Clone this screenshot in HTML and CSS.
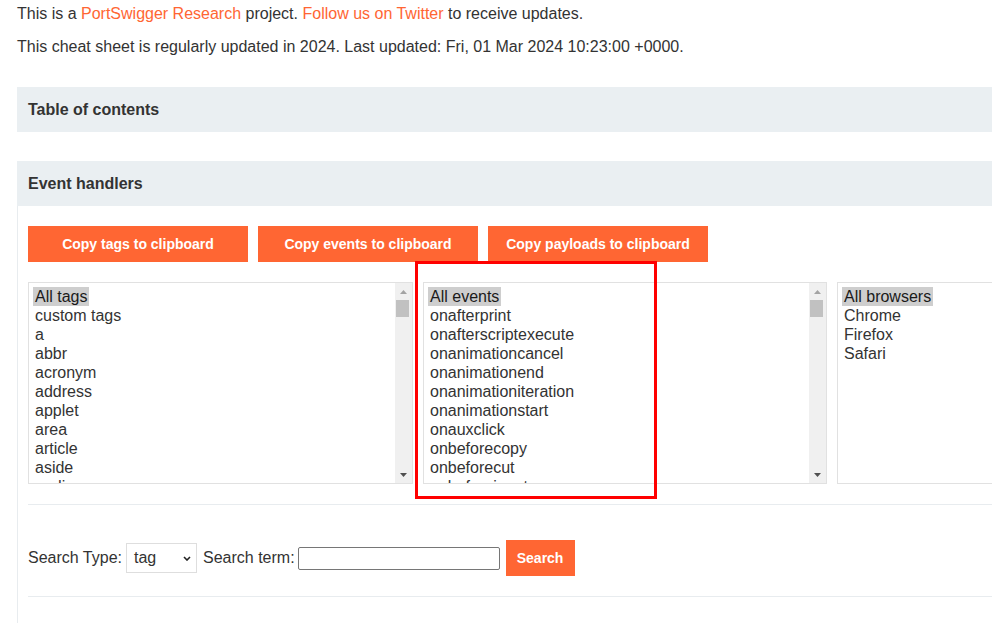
FILE: index.html
```html
<!DOCTYPE html>
<html lang="en">
<head>
<meta charset="utf-8">
<title>XSS cheat sheet</title>
<link rel="stylesheet" href="styles.css">
</head>
<body>
<div class="page">
  <div class="intro">
    <p>This is a <a href="#">PortSwigger Research</a> project. <a href="#">Follow us on Twitter</a> to receive updates.</p>
    <p>This cheat sheet is regularly updated in 2024. Last updated: Fri, 01 Mar 2024 10:23:00 +0000.</p>
  </div>

  <section class="toc">
    <h2 class="section-head">Table of contents</h2>
  </section>

  <section class="events">
    <h2 class="section-head">Event handlers</h2>
    <div class="section-body">
      <div class="copy-row">
        <button class="btn btn-copy">Copy tags to clipboard</button>
        <button class="btn btn-copy">Copy events to clipboard</button>
        <button class="btn btn-copy">Copy payloads to clipboard</button>
      </div>

      <div class="lists">
        <div class="listbox listbox-tags">
          <div class="options">
            <div class="opt"><span class="sel">All tags</span></div>
            <div class="opt"><span>custom tags</span></div>
            <div class="opt"><span>a</span></div>
            <div class="opt"><span>abbr</span></div>
            <div class="opt"><span>acronym</span></div>
            <div class="opt"><span>address</span></div>
            <div class="opt"><span>applet</span></div>
            <div class="opt"><span>area</span></div>
            <div class="opt"><span>article</span></div>
            <div class="opt"><span>aside</span></div>
            <div class="opt"><span>audio</span></div>
          </div>
          <div class="scrollbar">
            <div class="arrow"><svg width="7" height="4" viewBox="0 0 7 4"><polygon points="0,4 3.5,0 7,4" fill="#a3a3a3"/></svg></div>
            <div class="thumb"></div>
            <div class="track-fill"></div>
            <div class="arrow"><svg width="7" height="4" viewBox="0 0 7 4"><polygon points="0,0 7,0 3.5,4" fill="#505050"/></svg></div>
          </div>
        </div>

        <div class="listbox listbox-events">
          <div class="options">
            <div class="opt"><span class="sel">All events</span></div>
            <div class="opt"><span>onafterprint</span></div>
            <div class="opt"><span>onafterscriptexecute</span></div>
            <div class="opt"><span>onanimationcancel</span></div>
            <div class="opt"><span>onanimationend</span></div>
            <div class="opt"><span>onanimationiteration</span></div>
            <div class="opt"><span>onanimationstart</span></div>
            <div class="opt"><span>onauxclick</span></div>
            <div class="opt"><span>onbeforecopy</span></div>
            <div class="opt"><span>onbeforecut</span></div>
            <div class="opt"><span>onbeforeinput</span></div>
          </div>
          <div class="scrollbar">
            <div class="arrow"><svg width="7" height="4" viewBox="0 0 7 4"><polygon points="0,4 3.5,0 7,4" fill="#a3a3a3"/></svg></div>
            <div class="thumb"></div>
            <div class="track-fill"></div>
            <div class="arrow"><svg width="7" height="4" viewBox="0 0 7 4"><polygon points="0,0 7,0 3.5,4" fill="#505050"/></svg></div>
          </div>
        </div>

        <div class="listbox listbox-browsers">
          <div class="options">
            <div class="opt"><span class="sel">All browsers</span></div>
            <div class="opt"><span>Chrome</span></div>
            <div class="opt"><span>Firefox</span></div>
            <div class="opt"><span>Safari</span></div>
          </div>
        </div>

        <div class="highlight-box"></div>
      </div>

      <hr class="rule">

      <div class="search-row">
        <label class="label">Search Type:</label>
        <div class="type-select">
          <span class="type-value">tag</span>
          <svg class="chevron" width="8" height="5" viewBox="0 0 8 5"><polyline points="1,1 4,4 7,1" fill="none" stroke="#222" stroke-width="1.6"/></svg>
        </div>
        <label class="label">Search term:</label>
        <input class="term-input" type="text">
        <button class="btn btn-search">Search</button>
      </div>

      <hr class="rule">
    </div>
  </section>
</div>
</body>
</html>
```

FILE: styles.css
```css
html, body {
  margin: 0;
  padding: 0;
  overflow: hidden;
  background: #ffffff;
}

body {
  font-family: "Liberation Sans", Arial, sans-serif;
  font-size: 16px;
  color: #333333;
}

.page {
  width: 1140px;
  padding: 5px 0 40px 17px;
}

.intro p {
  margin: 0 0 15px;
  line-height: 18px;
}

.intro a {
  color: #ff6633;
  text-decoration: none;
}

.toc {
  margin-top: 31px;
  margin-bottom: 29px;
}

.section-head {
  margin: 0;
  height: 45px;
  display: flex;
  align-items: center;
  padding: 0 11px;
  background: #eaeff2;
  font-size: 16px;
  font-weight: bold;
  color: #333333;
}

.section-body {
  border-left: 1px solid #e8ecef;
  padding: 20px 0 30px 10px;
}

.copy-row {
  display: flex;
  gap: 10px;
}

.btn {
  border: none;
  background: #ff6633;
  color: #ffffff;
  font-family: "Liberation Sans", Arial, sans-serif;
  font-weight: bold;
  font-size: 14px;
  padding: 0;
  cursor: pointer;
}

.btn-copy {
  width: 220px;
  height: 36px;
}

.lists {
  position: relative;
  display: flex;
  gap: 10px;
  margin-top: 20px;
}

.listbox {
  height: 202px;
  box-sizing: border-box;
  border: 1px solid #e1e1e1;
  display: flex;
  overflow: hidden;
  background: #ffffff;
  flex: none;
}

.listbox-tags { width: 385px; }
.listbox-events { width: 404px; }
.listbox-browsers { width: 300px; }

.options {
  flex: 1;
  padding: 4px 0 0 4px;
  overflow: hidden;
}

.opt {
  height: 19px;
  line-height: 19px;
  white-space: nowrap;
}

.opt span {
  display: inline-block;
  padding: 0 2px;
}

.opt .sel {
  background: #cecece;
  color: #1a1a1a;
}

.scrollbar {
  width: 17px;
  flex: none;
  background: #f0f0f0;
  display: flex;
  flex-direction: column;
}

.arrow {
  height: 17px;
  display: flex;
  align-items: center;
  justify-content: center;
}

.thumb {
  height: 17px;
  margin: 0 3px 0 1px;
  background: #c1c1c1;
}

.track-fill {
  flex: 1;
}

.highlight-box {
  position: absolute;
  left: 387px;
  top: -21px;
  width: 242px;
  height: 238px;
  box-sizing: border-box;
  border: 3px solid #ff0000;
  pointer-events: none;
}

.rule {
  border: none;
  border-top: 1px solid #e8ecef;
  margin: 20px 0 0;
  height: 0;
}

.search-row {
  display: flex;
  align-items: center;
  padding: 35px 0 0;
}

.label {
  color: #333333;
  font-size: 16px;
}

.type-select {
  position: relative;
  width: 71px;
  height: 30px;
  box-sizing: border-box;
  border: 1px solid #dedede;
  margin: 0 6px 0 4px;
  display: flex;
  align-items: center;
  padding-left: 7px;
  background: #ffffff;
}

.type-value {
  font-size: 16px;
  color: #333333;
}

.chevron {
  position: absolute;
  right: 5px;
  top: 12px;
}

.term-input {
  width: 202px;
  height: 23px;
  box-sizing: border-box;
  border: 1px solid #767676;
  border-radius: 2px;
  margin: 0 6px 0 3px;
  padding: 1px 2px;
  font-size: 14px;
}

.btn-search {
  width: 69px;
  height: 36px;
}
```
